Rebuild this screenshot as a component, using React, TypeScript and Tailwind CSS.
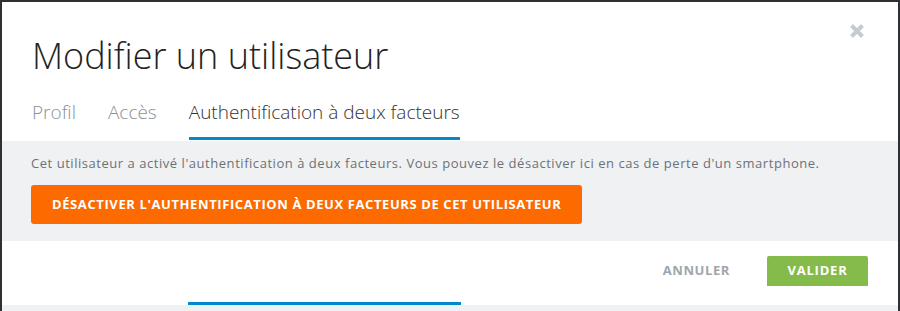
import React from "react";

export default function App() {
  const font = { fontFamily: "'Open Sans', Lato, sans-serif" };
  return (
    <div className="w-[900px] h-[311px] bg-[#2e3033] overflow-hidden [font-variant-ligatures:none]" style={font}>
      <div className="ml-[2px] mt-[2px] w-[896px] h-[309px] bg-white flex flex-col relative">
        <button className="absolute right-[33px] top-[21px] w-[16px] h-[16px] flex items-center justify-center">
          <svg width="16" height="16" viewBox="0 0 16 16">
            <path d="M2.5 2.5 L13.5 13.5 M13.5 2.5 L2.5 13.5" stroke="#c5cbd0" strokeWidth="4" strokeLinecap="butt" />
          </svg>
        </button>
        <div className="px-[30px]">
          <h1 className="text-[36px] leading-[44px] font-light text-[#222] pt-[32px]">Modifier un utilisateur</h1>
          <div className="flex gap-[32px] mt-[22px] text-[19px] leading-[24px] font-light">
            <div className="text-[#8a9197] pb-[16px]">Profil</div>
            <div className="text-[#8a9197] pb-[16px]">Accès</div>
            <div className="text-[#333] pb-[13px] border-b-[3px] border-[#0288cc]">Authentification à deux facteurs</div>
          </div>
        </div>
        <div className="mt-[1px] bg-[#f0f1f3] h-[100px] px-[29px] pt-[13px]">
          <p className="text-[13px] leading-[18px] text-[#6c7176] tracking-[0.54px]">
            Cet utilisateur a activé l'authentification à deux facteurs. Vous pouvez le désactiver ici en cas de perte d'un smartphone.
          </p>
          <button className="mt-[13px] h-[39px] px-[21px] bg-[#fd6a00] rounded-[3px] text-white font-bold text-[13px] uppercase tracking-[0.6px]">
            Désactiver l'authentification à deux facteurs de cet utilisateur
          </button>
        </div>
        <div className="h-[61px] flex justify-end items-start pt-[15px] pr-[30px] gap-[37px]">
          <button className="h-[30px] text-[13px] font-bold text-[#9ea6ad] uppercase tracking-[0.6px]">Annuler</button>
          <button className="h-[30px] w-[101px] bg-[#85bb4b] rounded-t-[2px] text-[13px] font-bold text-white uppercase tracking-[0.8px]">Valider</button>
        </div>
        <div className="h-[3px] pl-[186px]">
          <div className="w-[273px] h-[3px] bg-[#0288cc]" />
        </div>
        <div className="flex-1 bg-[#f0f1f3]" />
      </div>
    </div>
  );
}
